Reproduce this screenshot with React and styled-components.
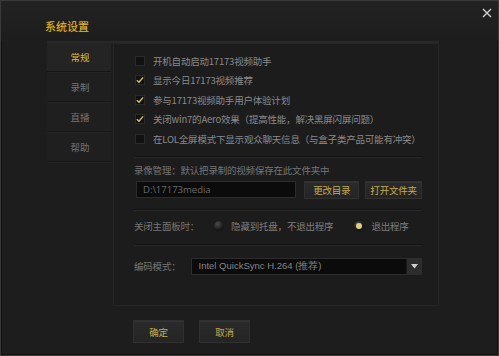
import React from "react";
import styled, { createGlobalStyle } from "styled-components";

const Global = createGlobalStyle`
  html, body { margin: 0; padding: 0; background: #1c1c1c; }
  * { box-sizing: border-box; }
`;

const FONT = `"Noto Sans CJK SC", "Noto Sans", "Liberation Sans", sans-serif`;

const Window = styled.div`
  width: 499px;
  height: 356px;
  background: #1d1d1d;
  border: 1px solid #3a3a3a;
  box-shadow: inset 1px 1px 0 #111, inset -1px -1px 0 #111;
  font-family: ${FONT};
  position: relative;
  display: flex;
  flex-direction: column;
`;

const TitleBar = styled.div`
  height: 40px;
  flex: none;
  display: flex;
  align-items: center;
  padding: 9px 0 0 44px;
  background: linear-gradient(#222 0%, #1d1d1d 100%);
`;

const Title = styled.div`
  color: #e2b82e;
  font-size: 11px;
  text-shadow: 0 0 1px #6b5210;
`;

const Close = styled.button`
  position: absolute;
  top: 6px;
  right: 5px;
  width: 12px;
  height: 12px;
  padding: 0;
  border: 0;
  background: transparent;
  display: flex;
  align-items: center;
  justify-content: center;
`;

const Main = styled.div`
  margin-left: 46px;
  width: 392px;
  height: 265px;
  display: flex;
  border-top: 2px solid #282828;
`;

const Sidebar = styled.div`
  width: 66px;
  flex: none;
  display: flex;
  flex-direction: column;
`;

const NavItem = styled.div`
  height: 29px;
  border-bottom: 1px solid #161616;
  box-shadow: 0 1px 0 #252525;
  display: flex;
  align-items: center;
  justify-content: center;
  padding-left: 2px;
  font-size: 9.5px;
  color: ${(p) => (p.$active ? "#e6bd2a" : "#747474")};
  background: ${(p) => (p.$active ? "#242424" : "#1f1f1f")};
  margin: 0 2px 1px 0;
`;

const Panel = styled.div`
  flex: 1;
  min-width: 0;
  background: #1c1c1c;
  border: 1px solid #262626;
  padding: 7px 16px 0 20px;
  display: flex;
  flex-direction: column;
`;

const CheckRow = styled.div`
  height: 19.5px;
  display: flex;
  align-items: center;
  gap: 8px;
  padding-left: 1px;
  font-size: 9.5px;
  letter-spacing: -0.2px;
  color: #8a8a8a;
  white-space: nowrap;
`;

const Box = styled.span`
  width: 10px;
  height: 10px;
  flex: none;
  background: #111;
  border: 1px solid #2a2a2a;
  display: flex;
  align-items: center;
  justify-content: center;
`;

const Sep = styled.div`
  height: 2px;
  border-top: 1px solid #141414;
  border-bottom: 1px solid #282828;
  margin: ${(p) => p.$m || "8px 0 0"};
`;

const Label = styled.div`
  font-size: 9.5px;
  letter-spacing: -0.2px;
  color: #767676;
  white-space: nowrap;
`;

const SectionLabel = styled(Label)`
  margin-top: 5px;
  height: 14px;
  line-height: 14px;
`;

const PathRow = styled.div`
  display: flex;
  align-items: center;
  margin-top: 4px;
  height: 18px;
`;

const Input = styled.div`
  width: 161px;
  height: 17px;
  margin-left: 2px;
  background: #0b0b0b;
  border: 1px solid #2c2c2c;
  color: #6a6a6a;
  font-family: "Open Sans", "Liberation Sans", sans-serif;
  font-size: 9.5px;
  line-height: 15px;
  padding-left: 6px;
`;

const Btn = styled.button`
  height: ${(p) => p.$h || 18}px;
  width: ${(p) => p.$w}px;
  margin-left: ${(p) => p.$ml || 0}px;
  padding: 0;
  border: 1px solid #303030;
  background: linear-gradient(#2b2b2b, #242424);
  box-shadow: inset 0 1px 0 #333;
  color: #c2ad52;
  font-family: ${FONT};
  font-size: 9.5px;
  letter-spacing: -0.2px;
  display: flex;
  align-items: center;
  justify-content: center;
`;

const RadioRow = styled.div`
  height: 24px;
  display: flex;
  align-items: center;
  margin-top: 3px;
`;

const RadioItem = styled.div`
  display: flex;
  align-items: center;
  gap: 6px;
  margin-left: ${(p) => p.$ml}px;
  font-size: 9.5px;
  letter-spacing: -0.2px;
  color: #7e7e7e;
  white-space: nowrap;
`;

const Dot = styled.span`
  width: 12px;
  height: 12px;
  border-radius: 50%;
  background: radial-gradient(circle at 35% 30%, #4a4a4a, #1a1a1a 60%, #0a0a0a);
  border: 1px solid #1a1a1a;
  display: flex;
  align-items: center;
  justify-content: center;
  &::after {
    content: "";
    display: ${(p) => (p.$on ? "block" : "none")};
    width: 6px;
    height: 6px;
    border-radius: 50%;
    background: #e2cf7e;
  }
`;

const SelectRow = styled.div`
  display: flex;
  align-items: center;
  margin-top: 12px;
  height: 17px;
`;

const Select = styled.div`
  margin-left: 10px;
  width: 233px;
  height: 17px;
  background: #0b0b0b;
  border: 1px solid #2c2c2c;
  display: flex;
  align-items: center;
  justify-content: space-between;
  color: #858585;
  font-family: "Liberation Sans", sans-serif;
  font-size: 9.5px;
  padding-left: 7px;
`;

const Arrow = styled.span`
  width: 15px;
  height: 15px;
  background: #2d2d2d;
  border-left: 1px solid #1a1a1a;
  display: flex;
  align-items: center;
  justify-content: center;
`;

const Footer = styled.div`
  display: flex;
  align-items: center;
  padding: 14px 0 0 132px;
  gap: 15px;
`;

const Check = () => (
  <svg width="9" height="8" viewBox="0 0 9 8">
    <path d="M1 4.2 L3.4 6.5 L8 1" fill="none" stroke="#d2c274" strokeWidth="1.6" />
  </svg>
);

const options = [
  ["开机自动启动17173视频助手", false],
  ["显示今日17173视频推荐", true],
  ["参与17173视频助手用户体验计划", true],
  ["关闭win7的Aero效果（提高性能，解决黑屏闪屏问题）", true],
  ["在LOL全屏模式下显示观众聊天信息（与盒子类产品可能有冲突）", false],
];

export default function App() {
  return (
    <>
      <Global />
      <Window>
        <TitleBar>
          <Title>系统设置</Title>
        </TitleBar>
        <Close aria-label="关闭">
          <svg width="10" height="10" viewBox="0 0 10 10">
            <path d="M1 1 L9 9 M9 1 L1 9" stroke="#d0d0d0" strokeWidth="1.4" />
          </svg>
        </Close>
        <Main>
          <Sidebar>
            <NavItem $active>常规</NavItem>
            <NavItem>录制</NavItem>
            <NavItem>直播</NavItem>
            <NavItem>帮助</NavItem>
          </Sidebar>
          <Panel>
            {options.map(([t, c]) => (
              <CheckRow key={t}>
                <Box>{c && <Check />}</Box>
                {t}
              </CheckRow>
            ))}
            <Sep $m="7px 0 0" />
            <SectionLabel>录像管理：默认把录制的视频保存在此文件夹中</SectionLabel>
            <PathRow>
              <Input>D:\17173media</Input>
              <Btn $w={55} $ml={8}>更改目录</Btn>
              <Btn $w={57} $ml={6}>打开文件夹</Btn>
            </PathRow>
            <Sep $m="10px 0 0" />
            <RadioRow>
              <Label>关闭主面板时：</Label>
              <RadioItem $ml={14}>
                <Dot />
                隐藏到托盘，不退出程序
              </RadioItem>
              <RadioItem $ml={20}>
                <Dot $on />
                退出程序
              </RadioItem>
            </RadioRow>
            <Sep $m="6px 0 0" />
            <SelectRow>
              <Label>编码模式：</Label>
              <Select>
                Intel QuickSync H.264 (推荐)
                <Arrow>
                  <svg width="7" height="5" viewBox="0 0 7 5">
                    <path d="M0 0 H7 L3.5 4.5 Z" fill="#cfcfcf" />
                  </svg>
                </Arrow>
              </Select>
            </SelectRow>
          </Panel>
        </Main>
        <Footer>
          <Btn $w={51} $h={23}>确定</Btn>
          <Btn $w={51} $h={23}>取消</Btn>
        </Footer>
      </Window>
    </>
  );
}
